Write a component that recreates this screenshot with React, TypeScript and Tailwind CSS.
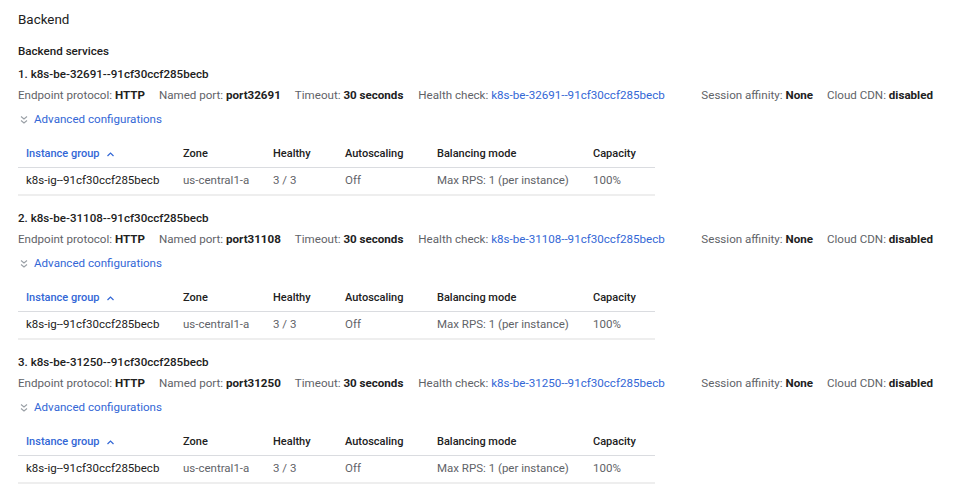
import React from "react";

const services = [
  { n: 1, id: "32691" },
  { n: 2, id: "31108" },
  { n: 3, id: "31250" },
];

function DoubleChevron() {
  return (
    <svg width="10" height="10" viewBox="0 0 10 10" className="mr-[5px]">
      <path d="M2 1.5 L5 4 L8 1.5" fill="none" stroke="#9aa0a6" strokeWidth="1.1" />
      <path d="M2 5.5 L5 8 L8 5.5" fill="none" stroke="#9aa0a6" strokeWidth="1.1" />
    </svg>
  );
}

function SortUp() {
  return (
    <svg width="9" height="6" viewBox="0 0 9 6" className="ml-[6px]">
      <path d="M1.5 5 L4.5 2 L7.5 5" fill="none" stroke="#3367d6" strokeWidth="1.2" />
    </svg>
  );
}

function Item({ label, value, className = "" }: { label: string; value: string; className?: string }) {
  return (
    <span className={`whitespace-nowrap shrink-0 ${className}`}>
      <span className="text-[#5f6368]">{label}: </span>
      <span className="font-bold text-[#212121]">{value}</span>
    </span>
  );
}

function Service({ n, id }: { n: number; id: string }) {
  const name = `k8s-be-${id}--91cf30ccf285becb`;
  return (
    <div className="mb-[13px]">
      <div className="h-[20px] flex items-center text-[11.6px] font-medium text-[#212121]">
        {n}. {name}
      </div>
      <div className="h-[22px] flex items-center text-[11.6px]">
        <Item label="Endpoint protocol" value="HTTP" />
        <Item label="Named port" value={`port${id}`} className="ml-[14px]" />
        <Item label="Timeout" value="30 seconds" className="ml-[14px]" />
        <span className="ml-[15px] w-[283px] whitespace-nowrap shrink-0">
          <span className="text-[#5f6368]">Health check: </span>
          <span className="text-[#3367d6]">{name}</span>
        </span>
        <Item label="Session affinity" value="None" />
        <Item label="Cloud CDN" value="disabled" className="ml-[14px]" />
      </div>
      <div className="h-[26px] flex items-center pl-[1px] text-[11.6px] text-[#3367d6]">
        <DoubleChevron />
        Advanced configurations
      </div>
      <table className="mt-[8px] w-[637px] text-[11.5px] border-collapse">
        <thead>
          <tr className="h-[26px] border-b border-[#dadce0] text-left text-[11px]">
            <th className="w-[157px] pl-[8px] font-medium text-[#3367d6]">
              <span className="inline-flex items-center">
                Instance group
                <SortUp />
              </span>
            </th>
            <th className="w-[90px] pl-[8px] font-medium text-[#212121]">Zone</th>
            <th className="w-[72px] pl-[8px] font-medium text-[#212121]">Healthy</th>
            <th className="w-[92px] pl-[8px] font-medium text-[#212121]">Autoscaling</th>
            <th className="w-[156px] pl-[8px] font-medium text-[#212121]">Balancing mode</th>
            <th className="pl-[8px] font-medium text-[#212121]">Capacity</th>
          </tr>
        </thead>
        <tbody>
          <tr className="h-[28px] border-b-2 border-[#eeeeee]">
            <td className="pl-[8px] text-[#212121]">k8s-ig--91cf30ccf285becb</td>
            <td className="pl-[8px] text-[#5f6368]">us-central1-a</td>
            <td className="pl-[8px] text-[#5f6368]">3 / 3</td>
            <td className="pl-[8px] text-[#5f6368]">Off</td>
            <td className="pl-[8px] text-[#5f6368]">Max RPS: 1 (per instance)</td>
            <td className="pl-[8px] text-[#5f6368]">100%</td>
          </tr>
        </tbody>
      </table>
    </div>
  );
}

export default function App() {
  return (
    <div className="w-[975px] h-[498px] bg-white px-[18px] pt-[10px] overflow-hidden" style={{ fontFamily: "Roboto, 'Liberation Sans', sans-serif" }}>
      <div className="h-[20px] flex items-center text-[13.4px] text-[#212121]">Backend</div>
      <div className="mt-[12px] h-[20px] mb-[3px] flex items-center text-[11.6px] font-medium text-[#212121]">
        Backend services
      </div>
      {services.map((s) => (
        <Service key={s.n} n={s.n} id={s.id} />
      ))}
    </div>
  );
}
